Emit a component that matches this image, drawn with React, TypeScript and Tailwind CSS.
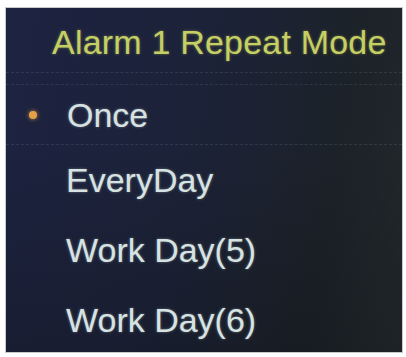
import React from 'react';

const items = ['EveryDay', 'Work Day(5)', 'Work Day(6)'];

export default function App() {
  return (
    <div className="w-[406px] h-[357px] bg-white pl-[5px] pt-[7px] font-['Liberation_Sans',Arial,sans-serif]">
      <div className="w-[398px] h-[346px] overflow-hidden border border-[#c9c9c9] bg-[linear-gradient(100deg,#1d2341_0%,#1c2238_45%,#1c2228_80%,#232a2c_100%)]">
        {/* header */}
        <div className="pt-[14px] pb-[10px] pl-[46px] border-b border-dashed border-[#5a6278]/35">
          <div className="text-[34px] leading-[40px] tracking-[0.2px] text-[#c5cf63] [text-shadow:0_0_3px_rgba(197,207,99,0.45)]">
            Alarm 1 Repeat Mode
          </div>
        </div>
        <div className="h-[12px] border-b border-dashed border-[#4c5468]/40" />

        {/* selected */}
        <div className="h-[60px] flex items-center pl-[23px] border-b border-dashed border-[#5a6278]/35">
          <span className="w-[8px] h-[8px] rounded-full bg-[#e3a046] shadow-[0_0_4px_rgba(227,160,70,0.8)]" />
          <span className="ml-[30px] text-[34px] leading-[60px] text-[#d6e3e2] [text-shadow:0_0_3px_rgba(214,227,226,0.4)]">
            Once
          </span>
        </div>

        {/* options */}
        <div className="flex flex-col bg-[linear-gradient(180deg,rgba(0,0,0,0)_0%,rgba(10,12,16,0.25)_100%)]">
          {items.map((label) => (
            <div
              key={label}
              className="h-[70px] pl-[60px] text-[34px] leading-[70px] text-[#d6e3e2] [text-shadow:0_0_3px_rgba(214,227,226,0.4)]"
            >
              {label}
            </div>
          ))}
        </div>
      </div>
    </div>
  );
}
